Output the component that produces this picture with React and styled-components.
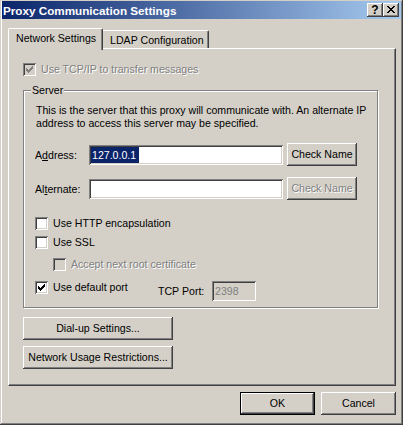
import React from 'react';
import styled, { createGlobalStyle, css } from 'styled-components';

const FACE = '#D4D0C8';
const HI = '#FFFFFF';
const SHADOW = '#808080';
const DARK = '#404040';
const NAVY = '#0A246A';

const Global = createGlobalStyle`
  html, body { margin: 0; padding: 0; background: ${FACE}; }
  body {
    font-family: "Liberation Sans", Arial, sans-serif;
    font-size: 10.6px;
    line-height: 13px;
    color: #000;
  }
  * { box-sizing: border-box; }
`;

const Window = styled.div`
  width: 403px;
  height: 425px;
  background: ${FACE};
  display: flex;
  flex-direction: column;
  box-shadow: inset -1px -1px ${DARK}, inset 1px 1px ${FACE}, inset -2px -2px ${SHADOW}, inset 2px 2px ${HI};
`;

const TitleBar = styled.div`
  margin: 1px 2px 0 2px;
  height: 18px;
  padding: 0 2px 0 1px;
  background: linear-gradient(to right, ${NAVY}, #A6CAF0);
  display: flex;
  align-items: center;
  justify-content: space-between;
`;

const Title = styled.span`
  color: #fff;
  font-weight: bold;
  font-size: 11.7px;
  white-space: nowrap;
`;

const CaptionButtons = styled.div`
  display: flex;
`;

const CaptionButton = styled.div`
  width: 16px;
  height: 14px;
  background: ${FACE};
  box-shadow: inset -1px -1px ${DARK}, inset 1px 1px ${HI}, inset -2px -2px ${SHADOW};
  display: flex;
  align-items: center;
  justify-content: center;
  font-weight: bold;
  font-size: 12px;
  line-height: 14px;
  padding-bottom: 1px;
`;

const Content = styled.div`
  flex: 1;
  display: flex;
  flex-direction: column;
  padding: 9px 7px 0 8px;
`;

const TabStrip = styled.div`
  display: flex;
  align-items: flex-end;
  height: 20px;
  position: relative;
  z-index: 1;
`;

const Tab = styled.div`
  display: flex;
  align-items: flex-start;
  white-space: nowrap;
  background: ${FACE};
  border-top: 1px solid ${HI};
  border-right: 1px solid ${DARK};
  box-shadow: inset -1px 0 ${SHADOW};
  padding-top: 3px;
  ${(p) =>
    p.$active
      ? css`
          height: 22px;
          margin-bottom: -2px;
          border-left: 1px solid ${HI};
          border-radius: 2px 2px 0 0;
          padding-left: 7px;
          padding-right: 6px;
        `
      : css`
          height: 18px;
          border-top-right-radius: 2px;
          padding-left: 7px;
          padding-right: 4px;
        `}
`;

const Panel = styled.div`
  flex: 1;
  display: flex;
  flex-direction: column;
  align-items: flex-start;
  border: 1px solid;
  border-color: ${HI} ${DARK} ${DARK} ${HI};
  box-shadow: inset -1px -1px ${SHADOW};
  padding: 14px 0 0 14px;
`;

const CheckRow = styled.div`
  display: flex;
  align-items: center;
  gap: 5px;
  height: 13px;
  white-space: nowrap;
  margin-top: ${(p) => p.$top || 0}px;
  margin-left: ${(p) => p.$indent || 0}px;
  ${(p) => p.$width && css`width: ${p.$width}px;`}
`;

const CheckBoxBox = styled.div`
  width: 13px;
  height: 13px;
  flex: none;
  display: flex;
  align-items: center;
  justify-content: center;
  background: ${(p) => (p.$disabled ? FACE : HI)};
  box-shadow: inset 1px 1px ${SHADOW}, inset -1px -1px ${HI}, inset 2px 2px ${DARK}, inset -2px -2px ${FACE};
`;

const Label = styled.span`
  white-space: nowrap;
  ${(p) =>
    p.$disabled &&
    css`
      color: ${SHADOW};
      text-shadow: 1px 1px ${HI};
    `}
`;

const GroupBox = styled.div`
  position: relative;
  margin-top: 14px;
  width: 355px;
  height: 218px;
  border: 1px solid ${SHADOW};
  box-shadow: inset 1px 1px ${HI}, 1px 1px ${HI};
  padding: 13px 0 0 11px;
  display: flex;
  flex-direction: column;
  align-items: flex-start;
`;

const Legend = styled.span`
  position: absolute;
  top: -7px;
  left: 7px;
  padding: 0 1px;
  background: ${FACE};
  line-height: 13px;
`;

const Description = styled.p`
  margin: 0 0 0 1px;
  white-space: nowrap;
  line-height: 13px;
`;

const FieldRow = styled.div`
  display: flex;
  align-items: center;
  height: 23px;
  margin-top: ${(p) => p.$top || 0}px;
`;

const FieldLabel = styled.span`
  width: ${(p) => p.$width}px;
  flex: none;
  white-space: nowrap;
  line-height: 20px;
`;

const Field = styled.div`
  width: ${(p) => p.$width}px;
  height: ${(p) => p.$height || 20}px;
  flex: none;
  padding: 2px 2px 2px 2px;
  background: ${(p) => (p.$disabled ? FACE : HI)};
  color: ${(p) => (p.$disabled ? SHADOW : '#000')};
  box-shadow: inset 1px 1px ${SHADOW}, inset -1px -1px ${HI}, inset 2px 2px ${DARK}, inset -2px -2px ${FACE};
  line-height: 16px;
  white-space: nowrap;
  overflow: hidden;
`;

const Selection = styled.span`
  display: inline-block;
  height: 16px;
  padding: 0 3px 0 1px;
  background: ${NAVY};
  color: #fff;
`;

const PlainValue = styled.span`
  padding-left: 1px;
`;

const Button = styled.div`
  width: ${(p) => p.$width}px;
  height: 23px;
  flex: none;
  display: flex;
  align-items: center;
  justify-content: center;
  white-space: nowrap;
  background: ${FACE};
  margin-left: ${(p) => p.$left || 0}px;
  margin-top: ${(p) => p.$top || 0}px;
  box-shadow: ${(p) =>
    p.$default
      ? `inset 0 0 0 1px #000, inset -2px -2px ${DARK}, inset 2px 2px ${HI}, inset -3px -3px ${SHADOW}`
      : `inset -1px -1px ${DARK}, inset 1px 1px ${HI}, inset -2px -2px ${SHADOW}`};
  ${(p) =>
    p.$disabled &&
    css`
      color: ${SHADOW};
      text-shadow: 1px 1px ${HI};
    `}
`;

const PortRow = styled.div`
  display: flex;
  align-items: flex-start;
  margin-top: 10px;
`;

const Footer = styled.div`
  display: flex;
  justify-content: flex-end;
  gap: 6px;
  margin-top: 6px;
  padding-bottom: 10px;
`;

const CheckMark = ({ color }) => (
  <svg width="7" height="7" viewBox="0 0 7 7" shapeRendering="crispEdges">
    <path
      fill={color}
      d="M0 2h1v3H0z M1 3h1v3H1z M2 4h1v3H2z M3 3h1v3H3z M4 2h1v3H4z M5 1h1v3H5z M6 0h1v3H6z"
    />
  </svg>
);

const CloseGlyph = () => (
  <svg width="8" height="7" viewBox="0 0 8 7" shapeRendering="crispEdges">
    <path
      fill="#000"
      d="M0 0h2v1H0z M6 0h2v1H6z M1 1h2v1H1z M5 1h2v1H5z M2 2h4v1H2z M3 3h2v1H3z M2 4h4v1H2z M1 5h2v1H1z M5 5h2v1H5z M0 6h2v1H0z M6 6h2v1H6z"
    />
  </svg>
);

function CheckItem({ checked, disabled, indent, top, width, children }) {
  return (
    <CheckRow $indent={indent} $top={top} $width={width}>
      <CheckBoxBox $disabled={disabled}>
        {checked && <CheckMark color={disabled ? SHADOW : '#000'} />}
      </CheckBoxBox>
      <Label $disabled={disabled}>{children}</Label>
    </CheckRow>
  );
}

export default function App() {
  return (
    <>
      <Global />
      <Window>
        <TitleBar>
          <Title>Proxy Communication Settings</Title>
          <CaptionButtons>
            <CaptionButton>?</CaptionButton>
            <CaptionButton>
              <CloseGlyph />
            </CaptionButton>
          </CaptionButtons>
        </TitleBar>
        <Content>
          <TabStrip>
            <Tab $active>Network Settings</Tab>
            <Tab>LDAP Configuration</Tab>
          </TabStrip>
          <Panel>
            <CheckItem checked disabled>
              Use TCP/IP to transfer messages
            </CheckItem>
            <GroupBox>
              <Legend>Server</Legend>
              <Description>
                This is the server that this proxy will communicate with. An alternate IP
                <br />
                address to access this server may be specified.
              </Description>
              <FieldRow $top={13}>
                <FieldLabel $width={54}>
                  A<u>d</u>dress:
                </FieldLabel>
                <Field $width={194}>
                  <Selection>127.0.0.1</Selection>
                </Field>
                <Button $width={70} $left={4}>
                  Check Name
                </Button>
              </FieldRow>
              <FieldRow $top={11}>
                <FieldLabel $width={54}>
                  Al<u>t</u>ernate:
                </FieldLabel>
                <Field $width={194} />
                <Button $width={70} $left={4} $disabled>
                  Check Name
                </Button>
              </FieldRow>
              <CheckItem top={17}>Use HTTP encapsulation</CheckItem>
              <CheckItem top={6}>Use SSL</CheckItem>
              <CheckItem top={9} indent={18} disabled>
                Accept next root certificate
              </CheckItem>
              <PortRow>
                <CheckItem checked width={123}>
                  Use default port
                </CheckItem>
                <FieldLabel $width={54}>TCP Port:</FieldLabel>
                <Field $width={44} $disabled>
                  <PlainValue>2398</PlainValue>
                </Field>
              </PortRow>
            </GroupBox>
            <Button $width={150} $top={9}>
              Dial-up Settings...
            </Button>
            <Button $width={150} $top={6}>
              Network Usage Restrictions...
            </Button>
          </Panel>
          <Footer>
            <Button $width={75} $default>
              OK
            </Button>
            <Button $width={75}>Cancel</Button>
          </Footer>
        </Content>
      </Window>
    </>
  );
}
